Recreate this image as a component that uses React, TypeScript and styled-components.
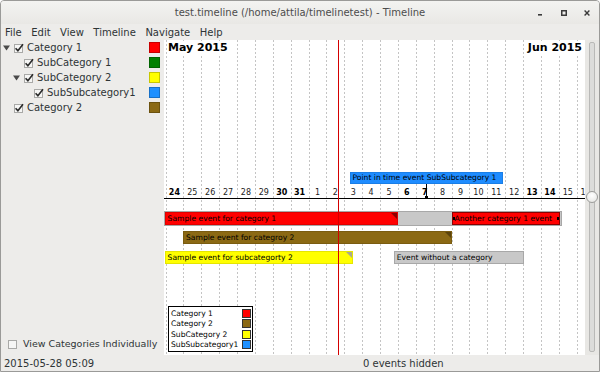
import React from "react";
import styled, { createGlobalStyle } from "styled-components";

const Global = createGlobalStyle`
  html, body { margin: 0; padding: 0; background: #ffffff; overflow: hidden; }
  * { box-sizing: border-box; }
`;

const UI_FONT = `"DejaVu Sans", "Liberation Sans", sans-serif`;

const Window = styled.div`
  width: 600px;
  height: 372px;
  display: flex;
  flex-direction: column;
  border: 1px solid #9a9a98;
  border-radius: 4px 4px 0 0;
  background: #edecea;
  font-family: ${UI_FONT};
  color: #2e3436;
  overflow: hidden;
`;

const TitleBar = styled.div`
  height: 23px;
  flex: none;
  display: grid;
  grid-template-columns: 1fr auto 1fr;
  align-items: center;
  background: linear-gradient(#f3f3f1, #e9e8e5);
`;

const TitleText = styled.div`
  grid-column: 2;
  font-size: 10px;
  color: #4c4c4c;
  white-space: nowrap;
`;

const Controls = styled.div`
  grid-column: 3;
  justify-self: end;
  display: flex;
  height: 100%;
`;

const ControlBox = styled.div<{ $w: number }>`
  width: ${(p) => p.$w}px;
  display: flex;
  align-items: center;
  justify-content: center;
`;

const MenuBar = styled.div`
  height: 16px;
  flex: none;
  display: flex;
  align-items: center;
  gap: 9.5px;
  padding-left: 4px;
  font-size: 10px;
`;

const MenuItem = styled.span`
  white-space: nowrap;
`;

const Main = styled.div`
  flex: 1;
  display: flex;
  min-height: 0;
`;

const Sidebar = styled.div`
  width: 163px;
  flex: none;
  display: flex;
  flex-direction: column;
  justify-content: space-between;
  padding-bottom: 6px;
`;

const Tree = styled.div`
  display: flex;
  flex-direction: column;
`;

const TreeRow = styled.div<{ $level: number }>`
  height: 15px;
  display: flex;
  align-items: center;
  padding-left: ${(p) => 2 + p.$level * 10}px;
  padding-right: 4px;
  font-size: 10px;
  white-space: nowrap;
`;

const Expander = styled.span`
  width: 11px;
  flex: none;
  display: flex;
  align-items: center;
`;

const CheckWrap = styled.span`
  width: 13px;
  flex: none;
  display: flex;
  align-items: center;
`;

const RowLabel = styled.span`
  flex: 1;
`;

const Swatch = styled.span<{ $c: string }>`
  width: 11px;
  height: 11px;
  flex: none;
  background: ${(p) => p.$c};
  border: 1px solid rgba(0, 0, 0, 0.22);
`;

const IndividualRow = styled.div`
  display: flex;
  align-items: center;
  gap: 5px;
  padding-left: 7px;
  font-size: 9.5px;
  white-space: nowrap;
`;

const Canvas = styled.div`
  flex: 1;
  position: relative;
  background: #ffffff;
  overflow: hidden;
  font-family: ${UI_FONT};
`;

const DayLine = styled.div`
  position: absolute;
  top: 0;
  bottom: 0;
  width: 1px;
  background: repeating-linear-gradient(to bottom, #c4c4c4 0 2px, transparent 2px 4px);
`;

const MonthLabel = styled.div<{ $right?: boolean }>`
  position: absolute;
  top: 1px;
  ${(p) => (p.$right ? "right: 2px;" : "left: 3px;")}
  font-size: 11px;
  font-weight: bold;
  color: #000;
  background: #fff;
  padding: 0 1px;
`;

const DayLabel = styled.div<{ $bold: boolean }>`
  position: absolute;
  top: 147px;
  transform: translateX(-50%);
  font-size: 8px;
  font-weight: ${(p) => (p.$bold ? "bold" : "normal")};
  color: ${(p) => (p.$bold ? "#000" : "#222")};
  background: #fff;
  padding: 0 1px;
  line-height: 11px;
`;

const Axis = styled.div`
  position: absolute;
  left: 0;
  right: 0;
  top: 158px;
  height: 1px;
  background: #000;
`;

const NowLine = styled.div`
  position: absolute;
  top: 0;
  bottom: 0;
  width: 1px;
  background: #d40000;
`;

const Container = styled.div`
  position: absolute;
  top: 171px;
  height: 15px;
  background: #c8c8c8;
  border: 1px solid #a8a8a8;
`;

const EventBar = styled.div<{ $c: string; $border: string }>`
  position: absolute;
  height: 13px;
  background: ${(p) => p.$c};
  border: 1px solid ${(p) => p.$border};
  font-size: 7.6px;
  line-height: 11px;
  padding-left: 2px;
  color: #000;
  white-space: nowrap;
  overflow: hidden;
`;

const Corner = styled.span<{ $c: string }>`
  position: absolute;
  top: 0;
  right: 0;
  width: 0;
  height: 0;
  border-top: 6px solid ${(p) => p.$c};
  border-left: 6px solid transparent;
`;

const Handle = styled.span<{ $side: "left" | "right" }>`
  position: absolute;
  top: 4px;
  ${(p) => p.$side}: -1px;
  width: 3px;
  height: 3px;
  background: #000;
`;

const PointBox = styled.div`
  position: absolute;
  top: 132px;
  height: 12px;
  background: #1e8cff;
  border: 1px solid #1a7ee6;
  font-size: 7.6px;
  line-height: 10px;
  padding-left: 2px;
  color: #000;
  white-space: nowrap;
`;

const PointStem = styled.div`
  position: absolute;
  top: 144px;
  height: 14px;
  width: 1px;
  background: #000;
`;

const PointDot = styled.div`
  position: absolute;
  top: 156px;
  width: 3px;
  height: 3px;
  background: #000;
`;

const Legend = styled.div`
  position: absolute;
  left: 4px;
  top: 266px;
  width: 85px;
  border: 1px solid #000;
  background: #fff;
  padding: 1px 1px 1px 2px;
  display: flex;
  flex-direction: column;
`;

const LegendRow = styled.div`
  height: 10.5px;
  display: flex;
  align-items: center;
  justify-content: space-between;
  font-size: 7.6px;
  color: #000;
  white-space: nowrap;
`;

const LegendSwatch = styled.span<{ $c: string }>`
  width: 9px;
  height: 9px;
  background: ${(p) => p.$c};
  border: 1px solid #333;
`;

const SliderColumn = styled.div`
  width: 14px;
  flex: none;
  position: relative;
  display: flex;
  justify-content: center;
  padding: 2px 0 3px;
  background: #e8e7e4;
`;

const Trough = styled.div`
  width: 6px;
  border: 1px solid #b9b9b7;
  background: #dcdcda;
  border-radius: 2px;
`;

const Knob = styled.div`
  position: absolute;
  left: 1px;
  top: 151px;
  width: 12px;
  height: 12px;
  border-radius: 50%;
  border: 1px solid #9c9c9a;
  background: radial-gradient(circle at 50% 35%, #ffffff, #e2e2df);
`;

const StatusBar = styled.div`
  height: 16px;
  flex: none;
  display: grid;
  grid-template-columns: 1fr 1fr 1fr;
  align-items: center;
  padding-left: 3px;
  font-size: 10px;
  white-space: nowrap;
`;

const StatusCenter = styled.span`
  grid-column: 2;
  justify-self: end;
  margin-right: -43px;
`;

const CheckIcon = ({ checked = true }: { checked?: boolean }) => (
  <svg width="10" height="10" viewBox="0 0 10 10">
    <rect x="0.5" y="1.5" width="8" height="8" fill="#f6f6f5" stroke="#a9a9a7" />
    {checked && (
      <path d="M1.6 5.2 L3.9 7.8 L9 1.2" fill="none" stroke="#2a2a2a" strokeWidth="1.6" />
    )}
  </svg>
);

const Triangle = () => (
  <svg width="7" height="6" viewBox="0 0 7 6">
    <path d="M0 0.5 H7 L3.5 5.5 Z" fill="#4a4a4a" />
  </svg>
);

const DAY_W = 17.88;
const X0 = 1.5;
const px = (d: number) => X0 + d * DAY_W;

const days = [24, 25, 26, 27, 28, 29, 30, 31, 1, 2, 3, 4, 5, 6, 7, 8, 9, 10, 11, 12, 13, 14, 15, 16];
const weekend = new Set([0, 6, 7, 13, 14, 20, 21]);

const treeRows = [
  { level: 0, expander: true, label: "Category 1", color: "#ff0000" },
  { level: 1, expander: false, label: "SubCategory 1", color: "#008000" },
  { level: 1, expander: true, label: "SubCategory 2", color: "#ffff00" },
  { level: 2, expander: false, label: "SubSubcategory1", color: "#1e90ff" },
  { level: 0, expander: false, label: "Category 2", color: "#8b6914" },
];

const legendRows = [
  { label: "Category 1", color: "#ff0000" },
  { label: "Category 2", color: "#8b6914" },
  { label: "SubCategory 2", color: "#ffff00" },
  { label: "SubSubcategory1", color: "#1e90ff" },
];

type Ev = {
  label: string;
  start: number;
  end: number;
  top: number;
  color: string;
  border: string;
  corner?: string;
  handles?: boolean;
};

const events: Ev[] = [
  { label: "Sample event for category 1", start: -0.05, end: 13, top: 172, color: "#ff0000", border: "#e00000", corner: "#8a0000" },
  { label: "Another category 1 event", start: 16, end: 22.05, top: 172, color: "#ff0000", border: "#8a0000", handles: true },
  { label: "Sample event for categroy 2", start: 0.98, end: 16, top: 191, color: "#8b6914", border: "#7a5c10", corner: "#5a430c" },
  { label: "Sample event for subcategorty 2", start: -0.05, end: 10.5, top: 211, color: "#ffff00", border: "#e6e600", corner: "#a8a890" },
  { label: "Event without a category", start: 12.77, end: 20.05, top: 211, color: "#c8c8c8", border: "#a8a8a8" },
];

const POINT = 14.57;
const POINT_W = 153;

export default function App() {
  return (
    <>
      <Global />
      <Window>
        <TitleBar>
          <TitleText>test.timeline (/home/attila/timelinetest) - Timeline</TitleText>
          <Controls>
            <ControlBox $w={26}>
              <svg width="6" height="6" viewBox="0 0 6 6">
                <rect x="1" y="4" width="4" height="1.6" fill="#3a3a3a" />
              </svg>
            </ControlBox>
            <ControlBox $w={22}>
              <svg width="6" height="6" viewBox="0 0 6 6">
                <rect x="0.75" y="0.75" width="4.5" height="4.5" fill="none" stroke="#3a3a3a" strokeWidth="1.5" />
              </svg>
            </ControlBox>
            <ControlBox $w={24}>
              <svg width="6" height="6" viewBox="0 0 6 6">
                <path d="M0.6 0.6 L5.4 5.4 M5.4 0.6 L0.6 5.4" stroke="#3a3a3a" strokeWidth="1.4" />
              </svg>
            </ControlBox>
          </Controls>
        </TitleBar>
        <MenuBar>
          {["File", "Edit", "View", "Timeline", "Navigate", "Help"].map((m) => (
            <MenuItem key={m}>{m}</MenuItem>
          ))}
        </MenuBar>
        <Main>
          <Sidebar>
            <Tree>
              {treeRows.map((r) => (
                <TreeRow key={r.label} $level={r.level}>
                  <Expander>{r.expander && <Triangle />}</Expander>
                  <CheckWrap>
                    <CheckIcon />
                  </CheckWrap>
                  <RowLabel>{r.label}</RowLabel>
                  <Swatch $c={r.color} />
                </TreeRow>
              ))}
            </Tree>
            <IndividualRow>
              <CheckIcon checked={false} />
              <span>View Categories Individually</span>
            </IndividualRow>
          </Sidebar>
          <Canvas>
            {days.map((_, k) => (
              <DayLine key={"l" + k} style={{ left: px(k) }} />
            ))}
            <MonthLabel>May 2015</MonthLabel>
            <MonthLabel $right>Jun 2015</MonthLabel>
            <PointBox style={{ left: px(POINT) - POINT_W / 2, width: POINT_W }}>
              Point in time event SubSubcategory 1
            </PointBox>
            {days.map((d, k) => (
              <DayLabel key={"d" + k} $bold={weekend.has(k)} style={{ left: px(k + 0.5) }}>
                {d}
              </DayLabel>
            ))}
            <Axis />
            <PointStem style={{ left: px(POINT) }} />
            <PointDot style={{ left: px(POINT) - 1 }} />
            <Container style={{ left: 0, width: px(22.17) }} />
            {events.map((e) => (
              <EventBar
                key={e.label}
                $c={e.color}
                $border={e.border}
                style={{ left: px(e.start), width: (e.end - e.start) * DAY_W, top: e.top }}
              >
                {e.label}
                {e.corner && <Corner $c={e.corner} />}
                {e.handles && (
                  <>
                    <Handle $side="left" />
                    <Handle $side="right" />
                  </>
                )}
              </EventBar>
            ))}
            <NowLine style={{ left: px(9.65) }} />
            <Legend>
              {legendRows.map((r) => (
                <LegendRow key={r.label}>
                  <span>{r.label}</span>
                  <LegendSwatch $c={r.color} />
                </LegendRow>
              ))}
            </Legend>
          </Canvas>
          <SliderColumn>
            <Trough />
            <Knob />
          </SliderColumn>
        </Main>
        <StatusBar>
          <span>2015-05-28 05:09</span>
          <StatusCenter>0 events hidden</StatusCenter>
        </StatusBar>
      </Window>
    </>
  );
}
